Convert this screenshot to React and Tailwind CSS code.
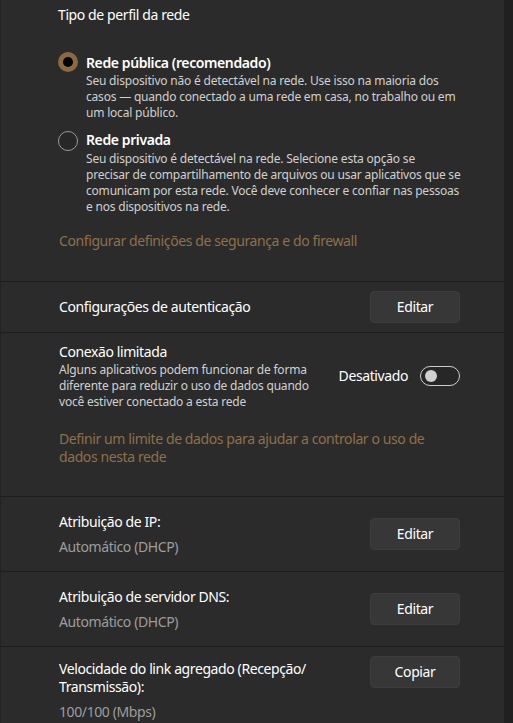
import React from 'react';

const EditButton = ({ label = 'Editar', className = '' }) => (
  <button className={`w-[90px] h-8 rounded-[4px] bg-[#373737] border border-[#3d3d3d] text-sm text-white shrink-0 ${className}`}>
    {label}
  </button>
);

const Radio = ({ checked }) =>
  checked ? (
    <div className="w-5 h-5 rounded-full bg-[#8a6b40] flex items-center justify-center shrink-0">
      <div className="w-[10px] h-[10px] rounded-full bg-black" />
    </div>
  ) : (
    <div className="w-5 h-5 rounded-full border border-[#9a9a9a] bg-[#272727] shrink-0" />
  );

const Separator = () => <div className="h-px bg-[#1d1d1d]" />;

const InfoRow = ({ title, value }) => (
  <div className="h-[74px] flex items-center justify-between pl-[58px] pr-[44px]">
    <div>
      <p className="text-sm leading-5 text-white">{title}</p>
      <p className="text-sm leading-5 mt-[5px] text-[#9d9d9d]">{value}</p>
    </div>
    <EditButton />
  </div>
);

export default function App() {
  return (
    <div className="flex h-[723px] overflow-hidden bg-[#202020] font-['Noto_Sans',sans-serif] tracking-[-0.4px]">
      <div className="w-[504px] bg-[#2b2b2b] border-l border-[#232323] flex flex-col">
        {/* Network profile type */}
        <div className="h-[281px] pt-[5px] pl-[57px]">
          <p className="text-sm leading-5 text-white">Tipo de perfil da rede</p>

          <div className="flex gap-[8px] mt-[28px]">
            <div className="mt-[-1px]"><Radio checked /></div>
            <div>
              <p className="text-sm leading-5 font-semibold text-white">Rede pública (recomendado)</p>
              <p className="text-xs leading-4 tracking-[-0.2px] text-[#d0d0d0]">
                Seu dispositivo não é detectável na rede. Use isso na maioria dos<br />
                casos — quando conectado a uma rede em casa, no trabalho ou em<br />
                um local público.
              </p>
            </div>
          </div>

          <div className="flex gap-[8px] mt-[9px]">
            <div className="mt-px"><Radio /></div>
            <div>
              <p className="text-sm leading-5 font-semibold text-white">Rede privada</p>
              <p className="text-xs leading-4 mt-px tracking-[-0.2px] text-[#d0d0d0]">
                Seu dispositivo é detectável na rede. Selecione esta opção se<br />
                precisar de compartilhamento de arquivos ou usar aplicativos que se<br />
                comunicam por esta rede. Você deve conhecer e confiar nas pessoas<br />
                e nos dispositivos na rede.
              </p>
            </div>
          </div>

          <p className="mt-4 ml-[1px] text-sm leading-5 text-[#8f7048]">
            Configurar definições de segurança e do firewall
          </p>
        </div>

        <Separator />

        {/* Authentication */}
        <div className="h-[50px] flex items-center justify-between pl-[58px] pr-[44px]">
          <p className="text-sm text-white">Configurações de autenticação</p>
          <EditButton />
        </div>

        <Separator />

        {/* Metered connection */}
        <div className="h-[163px] pt-[9px] pl-[58px] pr-[44px]">
          <div className="flex items-center justify-between">
            <div>
              <p className="text-sm leading-5 text-white">Conexão limitada</p>
              <p className="text-xs leading-4 tracking-[-0.2px] text-[#d0d0d0]">
                Alguns aplicativos podem funcionar de forma<br />
                diferente para reduzir o uso de dados quando<br />
                você estiver conectado a esta rede
              </p>
            </div>
            <div className="flex items-center gap-3">
              <span className="text-sm text-white">Desativado</span>
              <div className="w-10 h-5 rounded-full border border-[#cfcfcf] bg-[#272727] flex items-center px-[4px]">
                <div className="w-3 h-3 rounded-full bg-[#d0d0d0]" />
              </div>
            </div>
          </div>
          <p className="mt-5 text-sm leading-[18px] text-[#8f7048]">
            Definir um limite de dados para ajudar a controlar o uso de<br />
            dados nesta rede
          </p>
        </div>

        <Separator />

        <InfoRow title="Atribuição de IP:" value="Automático (DHCP)" />

        <Separator />

        <InfoRow title="Atribuição de servidor DNS:" value="Automático (DHCP)" />

        <Separator />

        {/* Link speed */}
        <div className="flex items-start justify-between pl-[58px] pr-[44px]">
          <div className="pt-[13px]">
            <p className="text-sm leading-[18px] text-white">
              Velocidade do link agregado (Recepção/<br />
              Transmissão):
            </p>
            <p className="text-sm leading-5 mt-[6px] text-[#9d9d9d]">100/100 (Mbps)</p>
          </div>
          <EditButton label="Copiar" className="mt-[9px]" />
        </div>
      </div>
    </div>
  );
}
